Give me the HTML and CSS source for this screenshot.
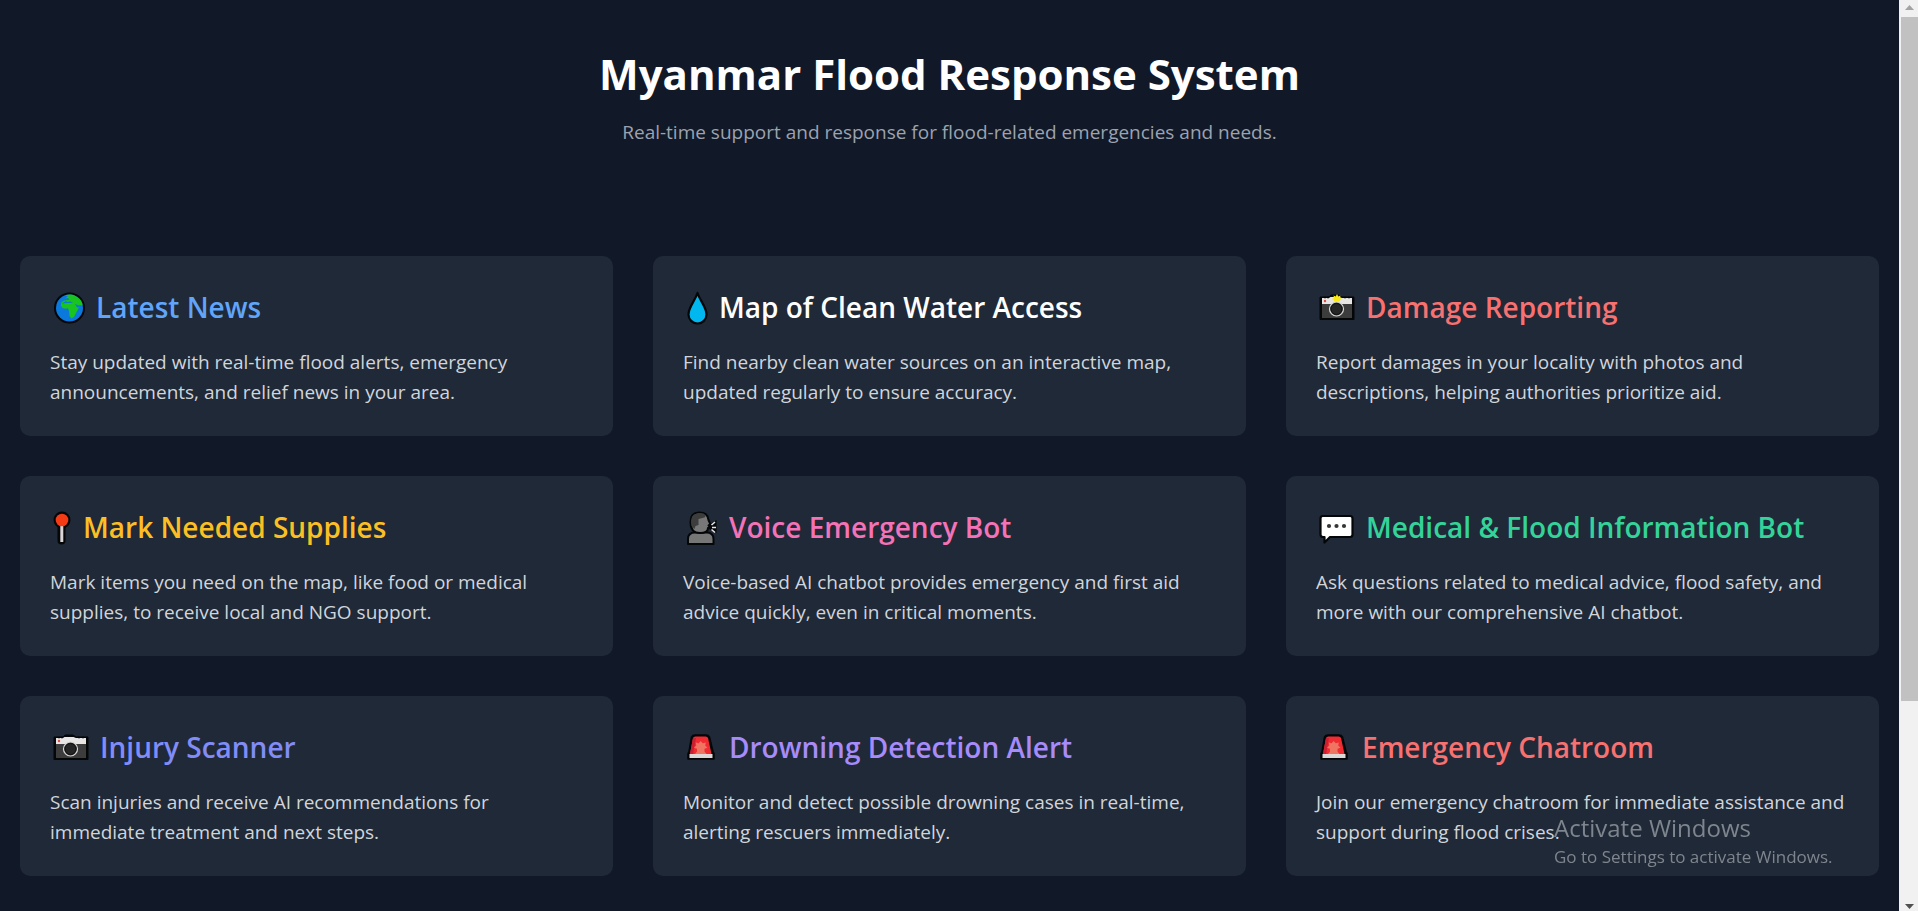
FILE: index.html
```html
<!DOCTYPE html>
<html lang="en">
<head>
<meta charset="utf-8">
<title>Myanmar Flood Response System</title>
<link rel="stylesheet" href="styles.css">
</head>
<body>
<svg class="symbols" aria-hidden="true">
  <symbol id="camera" viewBox="0 0 50 40">
    <path d="M4 10h9l2-2h8l3 2h12v22.500H4z" fill="#050608" stroke="#050608" stroke-width="1" stroke-linejoin="round"/>
    <path d="M6 11h7l1.500-1h9l2.500 1h10v6H6z" fill="#e8e6e5"/>
    <path d="M6 17h30V31H6z" fill="#3d3c3c"/>
    <path d="M9 9.500v2M12 9.500v2M29 9.500v2M33 9.500v2" stroke="#050608"/>
    <circle cx="9" cy="14" r="1.200" fill="#e04a43"/>
    <circle cx="20.500" cy="22" r="7" fill="#302f2f" stroke="#d8d8d8" stroke-width="1.200"/>
    <circle cx="20.500" cy="22" r="5.500" fill="#252525" stroke="#111" stroke-width="1"/>
  </symbol>
  <symbol id="siren" viewBox="0 0 46 40">
    <path d="M8.500 10Q9.500 8 12 8h11q2.500 0 3.500 2l3.500 14.500 1 2v5.500H5V26.500l1-2z" fill="#050608" stroke="#050608" stroke-width="1.500" stroke-linejoin="round"/>
    <path d="M10 11Q10.500 9.500 12.500 9.500h10q2 0 2.500 1.500L28.500 27H7z" fill="#f02b32"/>
    <path d="M10 11h3L10 27H7z" fill="#c91f31"/>
    <path d="M17.500 14l2.300 2.200 3-.7-.6 3 2.300 2.300-3 1v2.700l2 2.500H12l2-2.500v-2.700l-3-1 2.300-2.300-.6-3 3 .7z" fill="#f07462"/>
    <path d="M6.500 27h23v4h-23z" fill="#dcd8d7"/>
  </symbol>
</svg>
<div class="page">
  <header class="hero">
    <h1 class="hero-title">Myanmar Flood Response System</h1>
    <p class="hero-text">Real-time support and response for flood-related emergencies and needs.</p>
  </header>
  <main class="grid">
    <article class="card">
      <h2 class="card-title blue">
        <svg class="icon" viewBox="0 0 46 40" aria-hidden="true">
          <circle cx="19.500" cy="21" r="15.500" fill="#050608"/>
          <circle cx="19.500" cy="21" r="13.500" fill="#0b78dc"/>
          <path d="M12 16.500l4-2.500 1 1 3.500-.5 3 1.500 3-.5 2.500 2.500 3.500.5Q32.500 12.500 25 8.800 21 6.700 15 8.300l3 1.200-3 2 3-.5 1.500 1.500-5 1-3 1.500-.7 3.500 1.700 2.500 3 .8 2.500-.5 1 2.700.5 5 2 2.500 2.500-1.500 2.500-5 2.500-4.500h-2l-2-3.500 4 1.500 2.500-3.500z" fill="#19c41f"/>
        </svg>Latest News</h2>
      <p class="card-text">Stay updated with real-time flood alerts, emergency announcements, and relief news in your area.</p>
    </article>
    <article class="card">
      <h2 class="card-title white">
        <svg class="icon slim" viewBox="0 0 36 40" aria-hidden="true">
          <path d="M14.500 6C12 14 5.500 20 5.500 27.500c0 5 4 9 9 9s9-4 9-9C23.500 20 17 14 14.500 6z" fill="#00b7f0" stroke="#050608" stroke-width="2.200" stroke-linejoin="round"/>
        </svg>Map of Clean Water Access</h2>
      <p class="card-text">Find nearby clean water sources on an interactive map, updated regularly to ensure accuracy.</p>
    </article>
    <article class="card">
      <h2 class="card-title red">
        <svg class="icon wide" viewBox="0 0 50 40" aria-hidden="true">
          <use href="#camera" width="50" height="40"/>
          <path d="M21 7l1.300 2.500 2.200-1-.5 2.500 2.500 1-2.500 1v1.500h-6V13l-2.500-1 2.500-1-.5-2.500 2.200 1z" fill="#f9ea16"/>
        </svg>Damage Reporting</h2>
      <p class="card-text">Report damages in your locality with photos and descriptions, helping authorities prioritize aid.</p>
    </article>
    <article class="card">
      <h2 class="card-title amber">
        <svg class="icon pin" viewBox="0 0 33 40" aria-hidden="true">
          <path d="M11.500 18v15.500" stroke="#050608" stroke-width="8" stroke-linecap="round"/>
          <circle cx="12" cy="13" r="8.500" fill="#050608"/>
          <path d="M11.800 18v17" stroke="#d9d6d5" stroke-width="3"/>
          <circle cx="12" cy="13" r="6.300" fill="#f53b16"/>
        </svg>Mark Needed Supplies</h2>
      <p class="card-text">Mark items you need on the map, like food or medical supplies, to receive local and NGO support.</p>
    </article>
    <article class="card">
      <h2 class="card-title pink">
        <svg class="icon" viewBox="0 0 46 40" aria-hidden="true">
          <path d="M5 37v-5q0-6.500 7-6.500h11.500q7 0 7 6.500v5z" fill="#767676" stroke="#050608" stroke-width="2" stroke-linejoin="round"/>
          <path d="M7.500 15Q7.500 5.500 16 5.500q9 0 9.500 7.500l1.800 4-1.800 1.500 1.500 2-2 .5q0 5-8 5-9.500 0-9.500-11z" fill="#787878" stroke="#050608" stroke-width="2" stroke-linejoin="round"/>
          <path d="M8.500 19Q6 8 14 6.500q6-1.500 9 2l-1.500 2-6 1.500v6l-3 1-1 3z" fill="#3d3d3d"/>
          <path d="M26 18l7.500-5v13l-7.500-4z" fill="#050608"/>
          <path d="M28.500 18l3.500-3M29 20.500h4M28.500 22.500l3.500 3" stroke="#e4e4e4" stroke-width="1.600"/>
        </svg>Voice Emergency Bot</h2>
      <p class="card-text">Voice-based AI chatbot provides emergency and first aid advice quickly, even in critical moments.</p>
    </article>
    <article class="card">
      <h2 class="card-title green">
        <svg class="icon wide" viewBox="0 0 50 40" aria-hidden="true">
          <path d="M7 9h27q2.500 0 2.500 2.500v16q0 2.500-2.500 2.500H14l-5.500 5.500V30H7q-2.500 0-2.500-2.500v-16Q4.500 9 7 9z" fill="#fff" stroke="#050608" stroke-width="2.200" stroke-linejoin="round"/>
          <g fill="#353535"><circle cx="13" cy="19" r="2.100"/><circle cx="20.500" cy="19" r="2.100"/><circle cx="28" cy="19" r="2.100"/></g>
        </svg>Medical &amp; Flood Information Bot</h2>
      <p class="card-text">Ask questions related to medical advice, flood safety, and more with our comprehensive AI chatbot.</p>
    </article>
    <article class="card">
      <h2 class="card-title indigo"><svg class="icon wide" viewBox="0 0 50 40" aria-hidden="true"><use href="#camera" width="50" height="40"/></svg>Injury Scanner</h2>
      <p class="card-text">Scan injuries and receive AI recommendations for immediate treatment and next steps.</p>
    </article>
    <article class="card">
      <h2 class="card-title violet"><svg class="icon" viewBox="0 0 46 40" aria-hidden="true"><use href="#siren" width="46" height="40"/></svg>Drowning Detection Alert</h2>
      <p class="card-text">Monitor and detect possible drowning cases in real-time, alerting rescuers immediately.</p>
    </article>
    <article class="card">
      <h2 class="card-title red"><svg class="icon" viewBox="0 0 46 40" aria-hidden="true"><use href="#siren" width="46" height="40"/></svg>Emergency Chatroom</h2>
      <p class="card-text">Join our emergency chatroom for immediate assistance and support during flood crises.</p>
    </article>
  </main>
</div>
<aside class="watermark">
  <p class="watermark-title">Activate Windows</p>
  <p class="watermark-text">Go to Settings to activate Windows.</p>
</aside>
<div class="scrollbar" aria-hidden="true">
  <svg class="arrow" viewBox="0 0 17 17"><path d="M4 10l4.500-5L13 10z" fill="#a3a3a3"/></svg>
  <div class="track"><div class="thumb"></div></div>
  <svg class="arrow" viewBox="0 0 17 17"><path d="M4 10l4.500 5L13 10z" fill="#505050"/></svg>
</div>
</body>
</html>
```
FILE: styles.css
```css
* { box-sizing: border-box; }
html { scrollbar-width: none; }
body {
  margin: 0;
  padding-right: 19px;
  background: #111827;
  color: #fff;
  font-family: "Segoe UI", "Open Sans", "Noto Sans", sans-serif;
}
h1, h2, p { margin: 0; }
.symbols { position: absolute; width: 0; height: 0; }
.page { padding: 49px 20px 34px; }
.hero { padding-bottom: 109px; text-align: center; }
.hero-title { font-size: 42px; line-height: 50px; font-weight: 700; }
.hero-text { margin-top: 18px; font-size: 19px; line-height: 30px; color: #9ca3af; }
.grid { display: grid; grid-template-columns: repeat(3, 1fr); gap: 40px; }
.card { padding: 31px 30px 29px; border-radius: 10px; background: #1f2937; }
.card-title {
  display: flex;
  align-items: center;
  margin-bottom: 20px;
  font-size: 28px;
  line-height: 40px;
  font-weight: 600;
  white-space: nowrap;
}
.icon { flex: none; width: 46px; height: 40px; }
.icon.pin { width: 33px; }
.icon.slim { width: 36px; }
.icon.wide { width: 50px; }
.card-text { font-size: 19px; line-height: 30px; color: #d1d5db; }
.blue { color: #60a5fa; }
.white { color: #fff; }
.red { color: #f87171; }
.amber { color: #fbbf24; }
.pink { color: #f472b6; }
.green { color: #34d399; }
.indigo { color: #818cf8; }
.violet { color: #a78bfa; }
.watermark { position: fixed; right: 80px; bottom: 41px; width: 284px; color: #7f858e; white-space: nowrap; }
.watermark-title { font-size: 24px; line-height: 32px; }
.watermark-text { font-size: 17px; line-height: 26px; }
.scrollbar {
  position: fixed;
  inset: 0 0 0 auto;
  display: flex;
  flex-direction: column;
  width: 19px;
  padding-left: 2px;
  background: #f1f1f1;
}
.arrow { flex: none; width: 17px; height: 17px; }
.track { flex: 1; }
.thumb { height: 78%; background: #c1c1c1; }
```
